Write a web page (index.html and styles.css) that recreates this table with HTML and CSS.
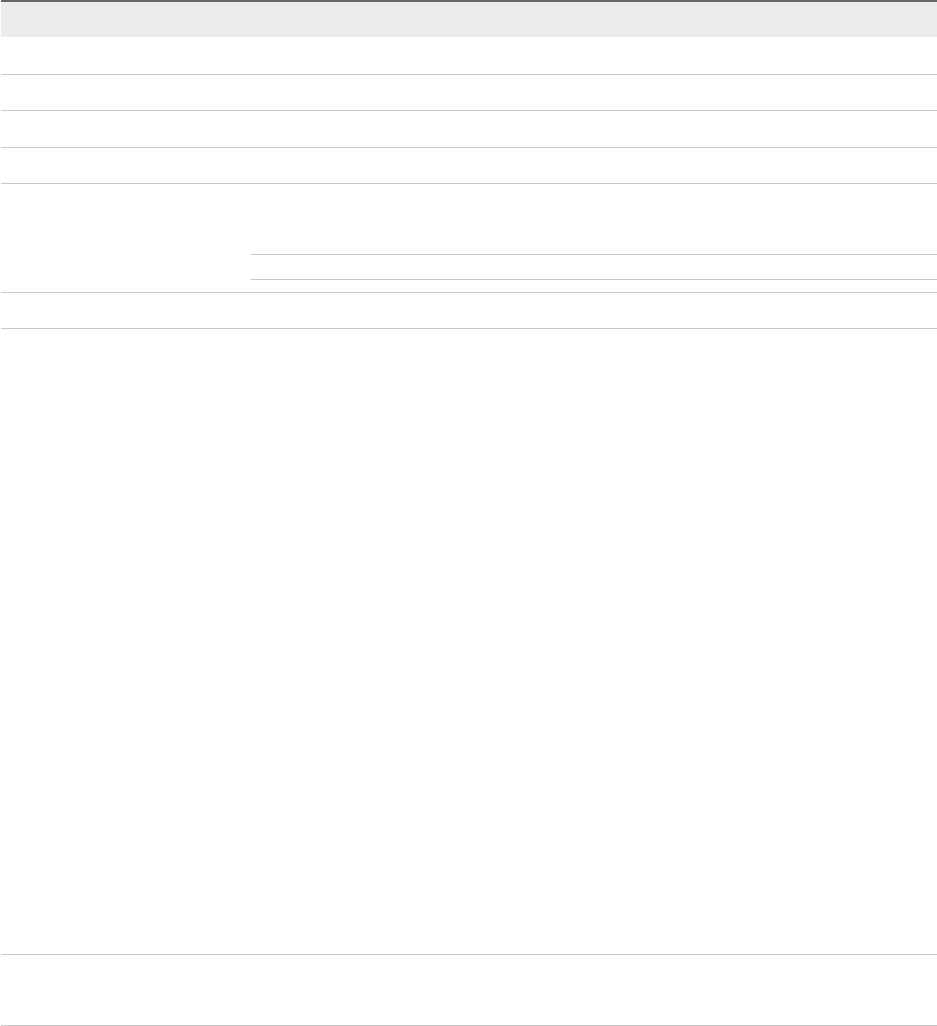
FILE: index.html
```html
<!DOCTYPE html>
<html>
  <head>
    <title>Table</title>
    <link rel="stylesheet" href="styles.css">
  </head>
<body>

  <div class="grid">
    <div class="head"></div>

    <div class="row h37"><div class="c1"></div><div class="c2"></div></div>
    <div class="row h35"><div class="c1"></div><div class="c2"></div></div>
    <div class="row h36"><div class="c1"></div><div class="c2"></div></div>
    <div class="row h35"><div class="c1"></div><div class="c2"></div></div>

    <div class="row">
      <div class="c1"></div>
      <div class="c2 nest">
        <div class="sub h70"></div>
        <div class="sub h24"></div>
      </div>
    </div>

    <div class="row h35"><div class="c1"></div><div class="c2"></div></div>
    <div class="row h625"><div class="c1"></div><div class="c2"></div></div>
    <div class="row h70"><div class="c1"></div><div class="c2"></div></div>
  </div>

</body>
</html>
```

FILE: styles.css
```css
body {
    margin: 0;
    padding: 0 0 0 1px;
    background: #ffffff;
    font-family: "Liberation Sans", Arial, sans-serif;
    font-size: 14px;
    color: #333333;
}

.grid {
    width: 936px;
}

.head {
    border-top: 2px solid #666666;
    background: #ececec;
    height: 35px;
}

.row {
    display: flex;
    border-bottom: 1px solid #c8c8c8;
}

.c1 {
    width: 250px;
    flex: none;
}

.c2 {
    flex: 1;
}

.nest {
    padding-bottom: 12px;
}

.sub {
    border-bottom: 1px solid #c8c8c8;
}

.h24 { height: 24px; }
.h35 { height: 35px; }
.h36 { height: 36px; }
.h37 { height: 37px; }
.h70 { height: 70px; }
.h625 { height: 625px; }
```
